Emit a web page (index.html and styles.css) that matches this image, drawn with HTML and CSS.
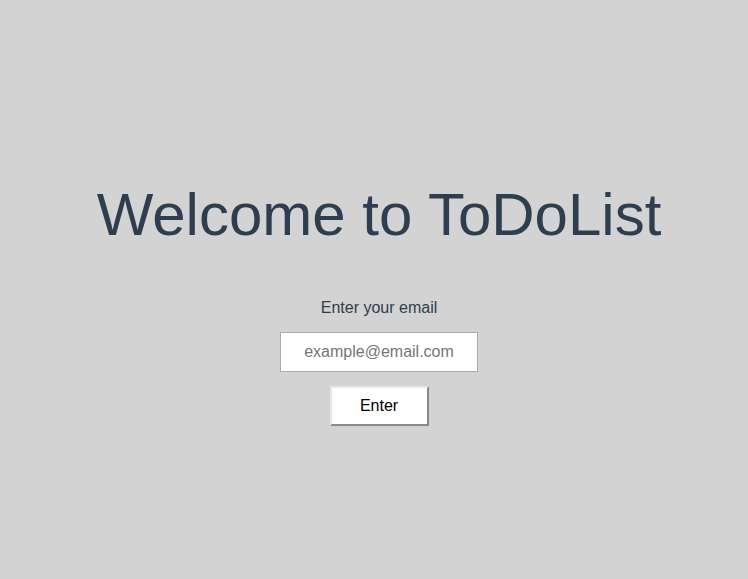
FILE: index.html
```html
<!DOCTYPE html>
<html lang="en">
<head>
<meta charset="utf-8">
<title>ToDoList</title>
<link rel="stylesheet" href="styles.css">
</head>
<body>
<main class="welcome">
  <h1 class="title">Welcome to ToDoList</h1>
  <form class="login">
    <label class="label" for="email">Enter your email</label>
    <input class="email" id="email" type="email" placeholder="example@email.com">
    <button class="enter" type="button">Enter</button>
  </form>
</main>
</body>
</html>
```
FILE: styles.css
```css
html, body {
  margin: 0;
  padding: 0;
}
body {
  background: #d3d3d3;
  font-family: "Liberation Sans", Arial, sans-serif;
  min-height: 579px;
}
.welcome {
  display: flex;
  flex-direction: column;
  align-items: center;
  padding-top: 178px;
  padding-left: 10px;
}
.title {
  margin: 0;
  font-size: 60px;
  line-height: 74px;
  font-weight: normal;
  color: #2c3e50;
}
.login {
  display: flex;
  flex-direction: column;
  align-items: center;
  margin-top: 46px;
}
.label {
  font-size: 16px;
  line-height: 20px;
  color: #2c3e50;
}
.email {
  margin-top: 14px;
  box-sizing: border-box;
  width: 198px;
  height: 40px;
  border: 1px solid #aaaaaa;
  background: #ffffff;
  font-family: "Liberation Sans", Arial, sans-serif;
  font-size: 16px;
  text-align: center;
  padding: 0 8px;
  outline: none;
}
.email::placeholder {
  color: #757575;
}
.enter {
  margin-top: 14px;
  box-sizing: border-box;
  width: 99px;
  height: 40px;
  background: #ffffff;
  border-style: solid;
  border-width: 2px;
  border-color: #e6e6e6 #8a8a8a #8a8a8a #e6e6e6;
  font-family: "Liberation Sans", Arial, sans-serif;
  font-size: 16px;
  color: #000000;
  padding: 0;
}
```
